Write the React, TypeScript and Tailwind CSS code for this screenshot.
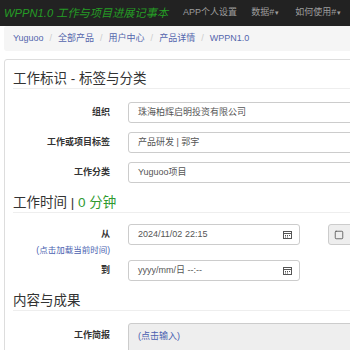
import { Square } from 'lucide-react';

const font = { fontFamily: '"Liberation Sans", "Noto Sans CJK SC", sans-serif' };

const CalendarIcon = () => (
    <svg width="9" height="8" viewBox="0 0 9 8" className="text-[#555] shrink-0">
        <rect x="0.5" y="0.5" width="8" height="7" fill="none" stroke="currentColor" strokeWidth="1" />
        <line x1="0.5" y1="2.5" x2="8.5" y2="2.5" stroke="currentColor" strokeWidth="1" />
        <rect x="2" y="4" width="1" height="1" fill="currentColor" />
        <rect x="4" y="4" width="1" height="1" fill="currentColor" />
        <rect x="6" y="4" width="1" height="1" fill="currentColor" />
        <rect x="2" y="5.5" width="1" height="1" fill="currentColor" />
        <rect x="4" y="5.5" width="1" height="1" fill="currentColor" />
    </svg>
);

const Heading = ({ children, className = '' }: { children: React.ReactNode; className?: string }) => (
    <div className={`text-[13.5px] leading-[19px] text-[#333] border-b border-[#eee] w-[400px] ${className}`}>
        {children}
    </div>
);

const Row = ({ label, value, className = '' }: { label: string; value: string; className?: string }) => (
    <div className={`flex items-center h-[21px] ${className}`}>
        <div className="w-[97px] shrink-0 text-right font-bold text-[9px] text-[#333]">{label}</div>
        <div className="ml-[18px] w-[300px] shrink-0 h-[21px] border border-[#ccc] rounded-[3px] bg-white flex items-center pl-[9px] text-[9px] text-[#555]">
            {value}
        </div>
    </div>
);

export default function App() {
    const crumbs = ['Yuguoo', '全部产品', '用户中心', '产品详情', 'WPPN1.0'];

    return (
        <div className="w-[350px] h-[350px] overflow-hidden bg-white" style={font}>
            {/* navbar */}
            <div className="h-[26px] bg-[#222] flex items-center whitespace-nowrap">
                <span className="ml-[4px] italic text-[11.2px] text-[#259d25]">WPPN1.0 工作与项目进展记事本</span>
                <span className="ml-[15px] text-[9px] text-[#9d9d9d]">APP个人设置</span>
                <span className="ml-[14px] text-[9px] text-[#9d9d9d]">数据#<span className="text-[7px] ml-[1px]">▾</span></span>
                <span className="ml-[16px] text-[9px] text-[#9d9d9d]">如何使用#<span className="text-[7px] ml-[1px]">▾</span></span>
            </div>

            {/* breadcrumb */}
            <div className="ml-[4px] w-[400px] h-[25px] bg-[#f5f5f5] rounded-[3px] flex items-center pl-[9px] text-[9px] whitespace-nowrap">
                {crumbs.map((c, i) => (
                    <span key={c} className="flex items-center">
                        {i > 0 && <span className="mx-[6px] text-[#ccc]">/</span>}
                        <span className="text-[#5466ad]">{c}</span>
                    </span>
                ))}
            </div>

            {/* panel */}
            <div className="ml-[4px] mt-[8px] w-[400px] border border-[#ddd] rounded-[3px] pl-[8px] pt-[9px] pb-[20px] whitespace-nowrap">
                <Heading>工作标识 - 标签与分类</Heading>

                <Row className="mt-[13px]" label="组织" value="珠海柏辉启明投资有限公司" />
                <Row className="mt-[9px]" label="工作或项目标签" value="产品研发 | 郭宇" />
                <Row className="mt-[9px]" label="工作分类" value="Yuguoo项目" />

                <Heading className="mt-[10px]">
                    工作时间 | <span className="text-[#2f9a2f]">0 分钟</span>
                </Heading>

                <div className="flex items-start mt-[11px] h-[30px]">
                    <div className="w-[97px] shrink-0 text-right">
                        <div className="h-[21px] leading-[21px] font-bold text-[9px] text-[#333]">从</div>
                        <div className="text-[8.5px] leading-[10px] text-[#4a5fb0]">(点击加载当前时间)</div>
                    </div>
                    <div className="ml-[18px] w-[172px] shrink-0 h-[21px] border border-[#ccc] rounded-[3px] flex items-center justify-between pl-[9px] pr-[7px] text-[9px] text-[#555]">
                        <span>2024/11/02 22:15</span>
                        <CalendarIcon />
                    </div>
                    <div className="ml-[28px] w-[40px] shrink-0 h-[21px] border border-[#ccc] rounded-[3px] bg-[#eee] flex items-center pl-[5px]">
                        <Square className="w-[10px] h-[10px] text-[#555]" strokeWidth={2} />
                    </div>
                </div>

                <div className="flex items-center mt-[6px] h-[21px]">
                    <div className="w-[97px] shrink-0 text-right font-bold text-[9px] text-[#333]">到</div>
                    <div className="ml-[18px] w-[172px] shrink-0 h-[21px] border border-[#ccc] rounded-[3px] flex items-center justify-between pl-[9px] pr-[7px] text-[9px] text-[#555]">
                        <span>yyyy/mm/日 --:--</span>
                        <CalendarIcon />
                    </div>
                </div>

                <Heading className="mt-[10px]">内容与成果</Heading>

                <div className="flex items-start mt-[12px]">
                    <div className="w-[97px] shrink-0 text-right font-bold text-[9px] text-[#333] leading-[24px]">工作简报</div>
                    <div className="ml-[18px] w-[300px] shrink-0 h-[50px] border border-[#ccc] rounded-[3px] bg-[#eee] pl-[9px] pt-[6px] text-[9px] text-[#4a5fb0]">
                        (点击输入)
                    </div>
                </div>
            </div>
        </div>
    );
}
